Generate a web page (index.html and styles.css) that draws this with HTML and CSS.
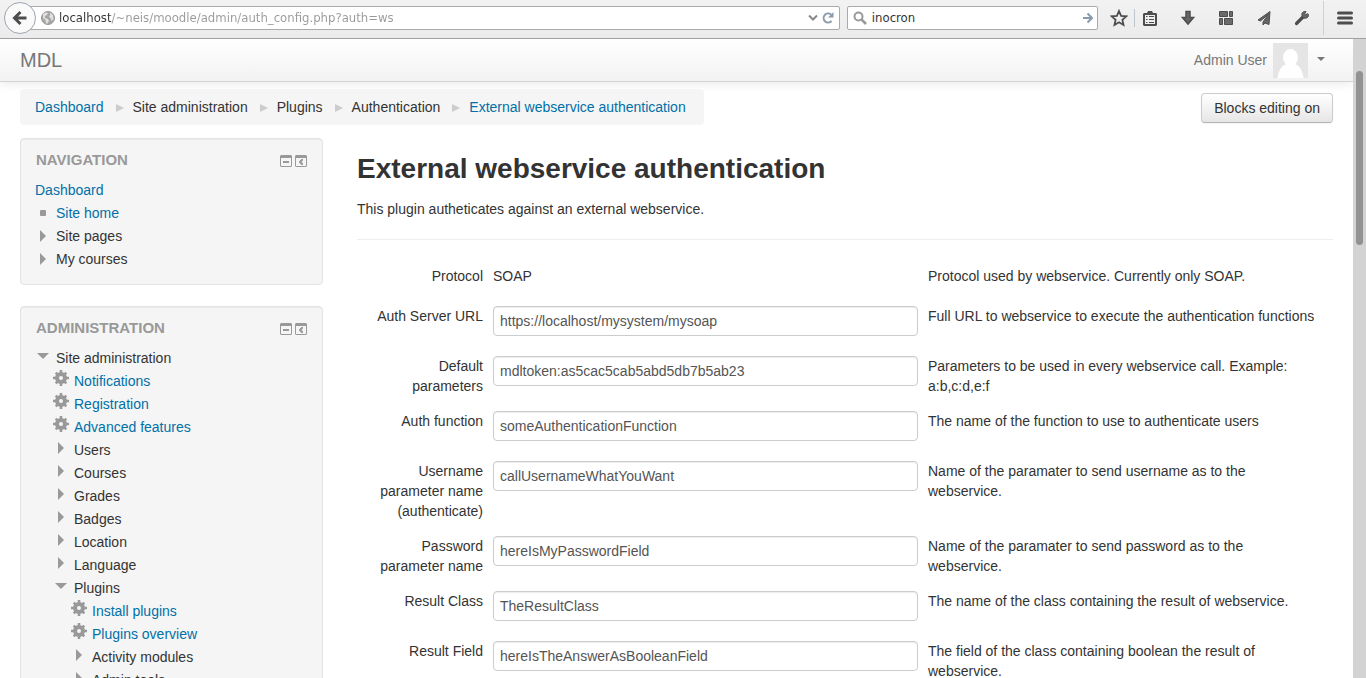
FILE: index.html
```html
<!DOCTYPE html>
<html lang="en">
<head>
<meta charset="utf-8">
<title>External webservice authentication</title>
<link rel="stylesheet" href="styles.css">
</head>
<body>
<svg class="defs" aria-hidden="true">
  <symbol id="gear" viewBox="0 0 16 16"><g fill="none" stroke="#999"><circle cx="8" cy="8" r="4" stroke-width="4"/><path stroke-width="2.600" d="M8 0v3M8 13v3M0 8h3M13 8h3M2.700 2.700l2 2M11.300 11.300l2 2M2.700 13.300l2-2M11.300 4.700l2-2"/></g></symbol>
  <symbol id="closed" viewBox="0 0 16 16"><path fill="#999" d="M5 3l6 6-6 6z"/></symbol>
  <symbol id="open" viewBox="0 0 16 16"><path fill="#999" d="M2 6h12l-6 6z"/></symbol>
  <symbol id="bullet" viewBox="0 0 16 16"><rect x="5" y="6" width="6" height="6" rx="1" fill="#999"/></symbol>
  <symbol id="minimise" viewBox="0 0 12 12"><path fill="#999" fill-rule="evenodd" d="M1 0h10l1 1v10l-1 1H1l-1-1V1zM1 3v8h10V3zM3 6h6v2H3z"/></symbol>
  <symbol id="dock" viewBox="0 0 12 12"><path fill="#999" fill-rule="evenodd" d="M1 0h10l1 1v10l-1 1H1l-1-1V1zM1 3v8h10V3zM6.500 4H8v1.500L6.500 7 8 8.500V10H6.500L4 7.500v-1z"/></symbol>
</svg>

<header class="toolbar">
  <button class="back" aria-label="Back"><svg width="16" height="16" viewBox="0 0 16 16"><path d="M8.500 2L2.500 8l6 6M3 8h11.500" fill="none" stroke="#4d4d4d" stroke-width="3"/></svg></button>
  <div class="field url">
    <svg width="14" height="14" viewBox="0 0 14 14"><circle cx="7" cy="7" r="6.500" fill="#a6a6a6" stroke="#999"/><path d="M2 3l3-1.500 2 .5-1 2-2 1v2l3 1 1 2-2 3-1-1-.5-3L2 7zM9 1.500l3 2.500.5 4-2 2-1-3-1.500-1 1-2z" fill="#e0e0e0"/></svg>
    <input class="address" aria-label="Address" value="localhost/~neis/moodle/admin/auth_config.php?auth=ws">
    <svg width="10" height="8" viewBox="0 0 10 8"><path d="M1 1.500l4 4 4-4" fill="none" stroke="#888" stroke-width="2"/></svg>
    <svg width="12" height="12" viewBox="0 0 12 12"><path d="M9.500 9A4.500 4.500 0 1 1 9 2.500" fill="none" stroke="#8a9aad" stroke-width="2"/><path d="M11.500 0v5.500H6z" fill="#8a9aad"/></svg>
  </div>
  <div class="field search">
    <svg width="14" height="14" viewBox="0 0 14 14"><circle cx="5.500" cy="5.500" r="4" fill="none" stroke="#999" stroke-width="2"/><path d="M8.500 8.500l4.500 4.500" stroke="#999" stroke-width="2.500"/></svg>
    <input aria-label="Search" value="inocron">
    <svg width="10" height="12" viewBox="0 0 10 12"><path d="M0 6h9M4.500 1.500L9 6l-4.500 4.500" fill="none" stroke="#8a9aad" stroke-width="2"/></svg>
  </div>
  <div class="tools">
    <button aria-label="Bookmark"><svg width="18" height="18" viewBox="0 0 18 18"><path d="M9 2l2.100 4.800 5.200.5-3.900 3.500 1.100 5.200L9 13.300 4.500 16l1.100-5.200-3.900-3.500 5.200-.5z" fill="none" stroke="#4d4d4d" stroke-width="1.800"/></svg></button>
    <i class="rule short"></i>
    <button aria-label="Reading list"><svg width="16" height="16" viewBox="0 0 16 16"><path fill="#4d4d4d" fill-rule="evenodd" d="M5 3l1-2h4l1 2h3l1 1v11l-1 1H2l-1-1V4l1-1zM3 5v9h10V5z"/><path d="M4 6.500h1.500M7 6.500h5M4 9.500h1.500M7 9.500h5M4 12.500h1.500M7 12.500h5" stroke="#4d4d4d" stroke-width="1.200"/></svg></button>
  </div>
  <div class="tools spaced">
    <button aria-label="Downloads"><svg width="14" height="16" viewBox="0 0 14 16"><path d="M5 1.500h4v6h3.500L7 14 1.500 7.500H5z" fill="#666" stroke="#4d4d4d" stroke-width="1.500"/></svg></button>
    <button aria-label="Tab groups"><svg width="14" height="14" viewBox="0 0 14 14"><path d="M.5.5h8v5h-8zM10.500.5h3v5h-3zM.5 7.500h3v6h-3zM5.500 7.500h8v6h-8z" fill="#6b6b6b" stroke="#4d4d4d"/></svg></button>
    <button aria-label="Share"><svg width="16" height="16" viewBox="0 0 16 16"><path d="M14 1.500L2 10l2.500 1L12 4.500 7 12v3l2-2 4 1.500z" fill="#666" stroke="#4d4d4d"/></svg></button>
    <button aria-label="Developer tools"><svg width="16" height="16" viewBox="0 0 16 16"><path d="M2.500 13.500l7-7" stroke="#4d4d4d" stroke-width="3.200" stroke-linecap="round"/><path d="M13.500 3.500l-1.800 1.300-1-1 1.300-2.300C8.500 1 7 3.500 8.300 6.500L9.500 8c3 1 5.500-.8 5-3.500z" fill="#666" stroke="#4d4d4d"/></svg></button>
  </div>
  <i class="rule"></i>
  <button class="menu" aria-label="Menu"><svg width="16" height="14" viewBox="0 0 16 14"><path d="M1.500 2h13M1.500 7h13M1.500 12h13" stroke="#4d4d4d" stroke-width="3" stroke-linecap="round"/></svg></button>
</header>

<div class="window">
  <div class="page">
    <nav class="navbar">
      <a class="brand" href="#">MDL</a>
      <button class="user">Admin User
        <svg class="avatar" width="35" height="35" viewBox="0 0 35 35"><path fill="#e5e5e5" d="M0 0h35v35H0z"/><ellipse cx="17.500" cy="14.500" rx="7.500" ry="8.500" fill="#fff"/><path d="M4.500 35c1-8 5-14 10-14h6c5 0 9 6 10 14z" fill="#fff"/></svg>
        <svg width="8" height="8" viewBox="0 0 8 8"><path d="M0 1h8L4 5z" fill="#777"/></svg>
      </button>
    </nav>
    <div class="topline">
      <ol class="crumbs">
        <li><a href="#">Dashboard</a></li>
        <li>Site administration</li>
        <li>Plugins</li>
        <li>Authentication</li>
        <li><a href="#">External webservice authentication</a></li>
      </ol>
      <button class="btn">Blocks editing on</button>
    </div>
    <div class="columns">
      <aside>
        <section class="block">
          <div class="block-head"><h2>Navigation</h2><button aria-label="Hide navigation block"><svg><use href="#minimise"/></svg></button><button aria-label="Dock navigation block"><svg><use href="#dock"/></svg></button></div>
          <ul class="tree centred">
            <li><a href="#">Dashboard</a></li>
            <li><svg><use href="#bullet"/></svg><a href="#">Site home</a></li>
            <li><svg><use href="#closed"/></svg>Site pages</li>
            <li><svg><use href="#closed"/></svg>My courses</li>
          </ul>
        </section>
        <section class="block">
          <div class="block-head"><h2>Administration</h2><button aria-label="Hide administration block"><svg><use href="#minimise"/></svg></button><button aria-label="Dock administration block"><svg><use href="#dock"/></svg></button></div>
          <ul class="tree">
            <li><svg><use href="#open"/></svg>Site administration</li>
            <li class="l2"><svg><use href="#gear"/></svg><a href="#">Notifications</a></li>
            <li class="l2"><svg><use href="#gear"/></svg><a href="#">Registration</a></li>
            <li class="l2"><svg><use href="#gear"/></svg><a href="#">Advanced features</a></li>
            <li class="l2"><svg><use href="#closed"/></svg>Users</li>
            <li class="l2"><svg><use href="#closed"/></svg>Courses</li>
            <li class="l2"><svg><use href="#closed"/></svg>Grades</li>
            <li class="l2"><svg><use href="#closed"/></svg>Badges</li>
            <li class="l2"><svg><use href="#closed"/></svg>Location</li>
            <li class="l2"><svg><use href="#closed"/></svg>Language</li>
            <li class="l2"><svg><use href="#open"/></svg>Plugins</li>
            <li class="l3"><svg><use href="#gear"/></svg><a href="#">Install plugins</a></li>
            <li class="l3"><svg><use href="#gear"/></svg><a href="#">Plugins overview</a></li>
            <li class="l3"><svg><use href="#closed"/></svg>Activity modules</li>
            <li class="l3"><svg><use href="#closed"/></svg>Admin tools</li>
          </ul>
        </section>
      </aside>
      <main>
        <h1>External webservice authentication</h1>
        <p class="intro">This plugin autheticates against an external webservice.</p>
        <form class="settings">
          <div class="row"><span class="name">Protocol</span><span>SOAP</span><p>Protocol used by webservice. Currently only SOAP.</p></div>
          <div class="row"><label class="name" for="url">Auth Server URL</label><input id="url" value="https://localhost/mysystem/mysoap"><p>Full URL to webservice to execute the authentication functions</p></div>
          <div class="row"><label class="name" for="params">Default parameters</label><input id="params" value="mdltoken:as5cac5cab5abd5db7b5ab23"><p>Parameters to be used in every webservice call. Example: a:b,c:d,e:f</p></div>
          <div class="row"><label class="name" for="func">Auth function</label><input id="func" value="someAuthenticationFunction"><p>The name of the function to use to authenticate users</p></div>
          <div class="row"><label class="name" for="uname">Username parameter name (authenticate)</label><input id="uname" value="callUsernameWhatYouWant"><p>Name of the paramater to send username as to the webservice.</p></div>
          <div class="row"><label class="name" for="pass">Password parameter name</label><input id="pass" value="hereIsMyPasswordField"><p>Name of the paramater to send password as to the webservice.</p></div>
          <div class="row"><label class="name" for="rclass">Result Class</label><input id="rclass" value="TheResultClass"><p>The name of the class containing the result of webservice.</p></div>
          <div class="row"><label class="name" for="rfield">Result Field</label><input id="rfield" value="hereIsTheAnswerAsBooleanField"><p>The field of the class containing boolean the result of webservice.</p></div>
        </form>
      </main>
    </div>
  </div>
  <div class="scrollbar"><div class="thumb"></div></div>
</div>
</body>
</html>
```
FILE: styles.css
```css
* { box-sizing: border-box; }
body {
  margin: 0;
  height: 100vh;
  display: flex;
  flex-direction: column;
  overflow: hidden;
  background: #fff;
  color: #333;
  font: 14px/20px "Liberation Sans", Arial, sans-serif;
}
h1, h2, p, ul, ol { margin: 0; padding: 0; }
ul, ol { list-style: none; }
a { color: #0070a8; text-decoration: none; }
button { padding: 0; border: 0; background: none; color: inherit; font: inherit; }
svg { display: block; flex: none; }
.defs { position: absolute; width: 0; height: 0; }

/* Browser toolbar */
.toolbar {
  flex: none;
  display: flex;
  align-items: center;
  height: 39px;
  padding: 0 10px 3px 4px;
  border-bottom: 1px solid #a0a0a0;
  background: linear-gradient(#f2f2f2, #ebebeb);
}
.back {
  position: relative;
  flex: none;
  display: grid;
  place-items: center;
  width: 32px;
  height: 32px;
  border: 1px solid #9da5b0;
  border-radius: 50%;
  background: #fafafa;
}
.field {
  display: flex;
  align-items: center;
  gap: 4px;
  height: 24px;
  padding: 0 5px;
  border: 1px solid #aaa;
  border-radius: 2px;
  background: #fff;
}
.field input {
  flex: 1;
  min-width: 0;
  padding: 0;
  border: 0;
  background: none;
  color: #333;
  font: 13px/20px "DejaVu Sans Condensed", "DejaVu Sans", sans-serif;
}
.url { flex: 822; gap: 4px; margin-left: -18px; padding-left: 22px; }
.field .address {
  color: #999;
  background: linear-gradient(90deg, #333 52px, #999 52px) text;
  -webkit-text-fill-color: transparent;
}
.search { flex: 249; margin-left: 7px; padding: 0 4px 0 5px; gap: 5px; }
.tools { display: flex; align-items: center; gap: 4px; margin-left: 10px; }
.spaced { gap: 16px; margin: 0 10px 0 16px; }
.tools button, .menu { display: grid; place-items: center; width: 22px; height: 22px; }
.rule { width: 1px; height: 34px; background: #d0d0d0; }
.rule.short { height: 18px; background: #c0c6cf; }
.menu { margin-left: 10px; }

/* Page viewport */
.window { flex: 1; min-height: 0; display: flex; }
.page { flex: 1; min-width: 0; overflow: hidden; }
.scrollbar { width: 13px; padding: 0 3px; background: #d3d3d3; }
.thumb { height: 174px; margin-top: 32px; border-radius: 4px; background: #919293; }

.navbar {
  display: flex;
  justify-content: space-between;
  align-items: center;
  height: 43px;
  padding: 0 28px 0 20px;
  border-bottom: 1px solid #d4d4d4;
  background: linear-gradient(#fff, #f2f2f2);
  box-shadow: 0 1px 10px rgba(0, 0, 0, .1);
}
.brand { color: #777; font-size: 20px; }
.user { display: flex; align-items: center; gap: 6px; color: #777; }
.avatar { margin-right: 3px; }

.topline {
  display: flex;
  justify-content: space-between;
  align-items: flex-start;
  padding: 7px 20px 13px;
}
.crumbs {
  display: flex;
  padding: 8px 18px 8px 15px;
  border-radius: 4px;
  background: #f5f5f5;
}
.crumbs li { display: flex; align-items: center; }
.crumbs li + li::before {
  content: "";
  margin: 2px 9px 0 12px;
  border: solid transparent;
  border-width: 4px 0 4px 8px;
  border-left-color: #ccc;
}
.btn {
  height: 30px;
  margin-top: 4px;
  padding: 0 12px;
  border: 1px solid #ccc;
  border-bottom-color: #b3b3b3;
  border-radius: 4px;
  background: linear-gradient(#fff, #e6e6e6);
  box-shadow: 0 1px 2px rgba(0, 0, 0, .05);
}

.columns {
  display: grid;
  grid-template-columns: 303fr 976fr;
  gap: 34px;
  padding: 0 20px;
}
.block {
  margin-bottom: 21px;
  padding: 11px 14px 13px;
  border: 1px solid #e3e3e3;
  border-radius: 4px;
  background: #f5f5f5;
  box-shadow: inset 0 1px 1px rgba(0, 0, 0, .05);
}
.block-head { display: flex; align-items: center; gap: 3px; padding: 0 1px 9px; }
.block-head h2 {
  flex: 1;
  color: #999;
  font-size: 15px;
  line-height: 20px;
  text-transform: uppercase;
}
.block-head button { padding-top: 2px; }
.block-head svg { width: 12px; height: 12px; }
.tree li { display: flex; gap: 5px; line-height: 23px; }
.tree svg { width: 16px; height: 16px; }
.tree.centred li { align-items: center; }
.tree.centred svg { margin-bottom: 3px; }
.tree .l2 { padding-left: 18px; }
.tree .l3 { padding-left: 36px; }

h1 { margin-top: 11px; font-size: 28px; line-height: 40px; }
.intro {
  margin: 10px 0 26px;
  padding-bottom: 20px;
  border-bottom: 1px solid #eee;
}
.row {
  display: grid;
  grid-template-columns: 126fr 425fr 405fr;
  column-gap: 10px;
  align-items: start;
  min-height: 40px;
  padding-bottom: 15px;
}
.row p { padding-right: 14px; }
.name { padding-left: 16px; text-align: right; }
.row input {
  width: 100%;
  height: 30px;
  margin-bottom: 5px;
  padding: 4px 6px;
  border: 1px solid #ccc;
  border-radius: 4px;
  background: #fff;
  box-shadow: inset 0 1px 1px rgba(0, 0, 0, .075);
  color: #555;
  font: inherit;
}
```
